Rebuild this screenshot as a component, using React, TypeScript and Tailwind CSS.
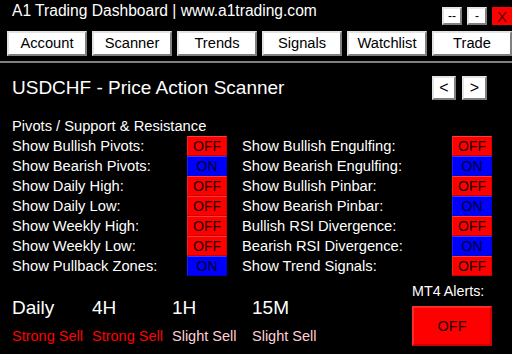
import React from "react";

// Bevelled white button, like the MT4 panel controls
const bevel =
  "bg-white border-2 border-t-[#e3e3e3] border-l-[#e3e3e3] border-b-[#7f7f7f] border-r-[#7f7f7f] text-black";

const NAV = ["Account", "Scanner", "Trends", "Signals", "Watchlist", "Trade"];

const LEFT = [
  { label: "Show Bullish Pivots:", on: false },
  { label: "Show Bearish Pivots:", on: true },
  { label: "Show Daily High:", on: false },
  { label: "Show Daily Low:", on: false },
  { label: "Show Weekly High:", on: false },
  { label: "Show Weekly Low:", on: false },
  { label: "Show Pullback Zones:", on: true },
];

const RIGHT = [
  { label: "Show Bullish Engulfing:", on: false },
  { label: "Show Bearish Engulfing:", on: true },
  { label: "Show Bullish Pinbar:", on: false },
  { label: "Show Bearish Pinbar:", on: true },
  { label: "Bullish RSI Divergence:", on: false },
  { label: "Bearish RSI Divergence:", on: true },
  { label: "Show Trend Signals:", on: false },
];

const TRENDS = [
  { tf: "Daily", signal: "Strong Sell", strong: true },
  { tf: "4H", signal: "Strong Sell", strong: true },
  { tf: "1H", signal: "Slight Sell", strong: false },
  { tf: "15M", signal: "Slight Sell", strong: false },
];

function Toggle({ on }: { on: boolean }) {
  return (
    <div
      className={
        on
          ? "w-[40px] h-[20px] flex items-center justify-center bg-[#0000ff] border border-t-[#3a3aff] border-l-[#1a1aff] border-b-[#0000c8] border-r-[#0000d8] text-[14px] leading-none text-[#000020]"
          : "w-[40px] h-[20px] flex items-center justify-center bg-[#ff0000] border border-t-[#ff3a3a] border-l-[#ff1a1a] border-b-[#c80000] border-r-[#d80000] text-[14px] leading-none text-[#200000]"
      }
    >
      {on ? "ON" : "OFF"}
    </div>
  );
}

function Row({ label, on }: { label: string; on: boolean }) {
  return (
    <div className="h-[20px] flex items-center justify-between">
      <span className="text-[14.7px] leading-[20px] text-white">{label}</span>
      <Toggle on={on} />
    </div>
  );
}

export default function App() {
  return (
    <div className="w-[512px] h-[354px] bg-black text-white overflow-hidden font-['Liberation_Sans',Arial,sans-serif]">
      {/* title bar */}
      <div className="h-[31px] flex items-start">
        <div className="ml-[12px] mt-[3px] text-[15.6px] leading-none whitespace-nowrap">
          A1 Trading Dashboard | www.a1trading.com
        </div>
        <div className="ml-auto mt-[7px] flex gap-[5px]">
          <div className={`${bevel} w-[20px] h-[18px] flex items-center justify-center text-[12px] leading-none`}>--</div>
          <div className={`${bevel} w-[20px] h-[18px] flex items-center justify-center text-[12px] leading-none`}>-</div>
          <div className="w-[20px] h-[18px] bg-[#ff0000] flex items-center justify-center text-[15px] leading-none text-[#600000]">
            X
          </div>
        </div>
      </div>

      {/* nav */}
      <div className="h-[25px] flex gap-[5px] pl-[7px]">
        {NAV.map((n) => (
          <div key={n} className={`${bevel} w-[80px] h-[25px] flex items-center justify-center text-[14.7px] leading-none`}>
            {n}
          </div>
        ))}
      </div>

      <div className="mt-[5px] h-[2px] bg-[#808080]" />

      <div className="px-[12px]">
        {/* scanner heading */}
        <div className="h-[53px] flex items-start">
          <div className="mt-[15px] text-[19px] leading-none whitespace-nowrap">USDCHF - Price Action Scanner</div>
          <div className="ml-auto mr-[13px] mt-[13px] flex gap-[6px]">
            <div className={`${bevel} w-[24px] h-[24px] flex items-center justify-center text-[16px] leading-none`}>&lt;</div>
            <div className={`${bevel} w-[25px] h-[24px] flex items-center justify-center text-[16px] leading-none`}>&gt;</div>
          </div>
        </div>

        <div className="h-[20px] text-[14.7px] leading-[20px]">Pivots / Support &amp; Resistance</div>

        <div className="flex">
          <div className="w-[215px] flex flex-col">
            {LEFT.map((r) => (
              <Row key={r.label} {...r} />
            ))}
          </div>
          <div className="ml-[15px] w-[250px] flex flex-col">
            {RIGHT.map((r) => (
              <Row key={r.label} {...r} />
            ))}
          </div>
        </div>

        {/* trends + alerts */}
        <div className="flex">
          <div className="pt-[22px] flex">
            {TRENDS.map((t, i) => (
              <div key={i} className="w-[80px] flex flex-col">
                <div className="h-[19px] text-[19px] leading-none">{t.tf}</div>
                <div
                  className={
                    t.strong
                      ? "mt-[12px] text-[14.5px] leading-none whitespace-nowrap text-[#ff0000]"
                      : "mt-[12px] text-[14.5px] leading-none whitespace-nowrap text-[#ffcfd4]"
                  }
                >
                  {t.signal}
                </div>
              </div>
            ))}
          </div>
          <div className="ml-auto mr-[8px] pt-[8px] flex flex-col">
            <div className="h-[15px] text-[14.3px] leading-none whitespace-nowrap">MT4 Alerts:</div>
            <div className="mt-[7px] w-[80px] h-[40px] bg-[#ff0000] border-2 border-t-[#ff2a2a] border-l-[#ff2a2a] border-b-[#d40000] border-r-[#d40000] flex items-center justify-center text-[14.5px] leading-none text-[#200000]">
              OFF
            </div>
          </div>
        </div>
      </div>
    </div>
  );
}
